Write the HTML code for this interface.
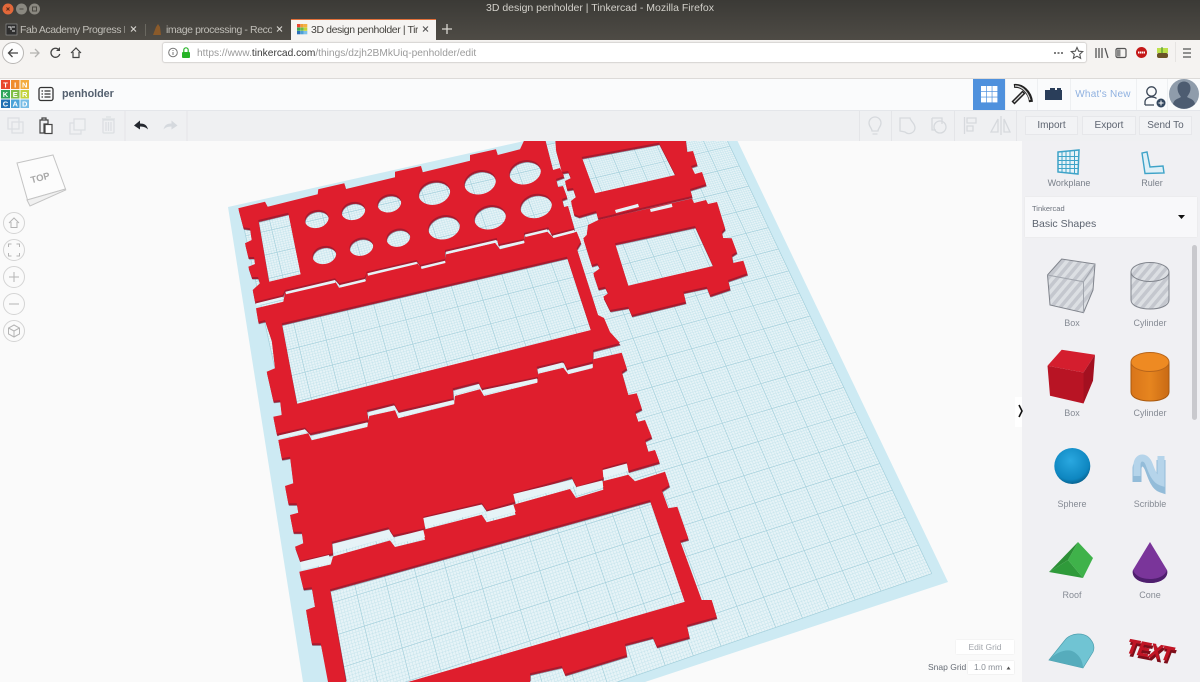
<!DOCTYPE html>
<html><head><meta charset="utf-8"><title>3D design penholder | Tinkercad</title>
<style>
html,body{margin:0;padding:0;width:1200px;height:682px;overflow:hidden;background:#fafafa;font-family:"Liberation Sans",sans-serif}
.b{position:absolute}
.t{position:absolute;white-space:nowrap;line-height:14px;height:14px}
.c{text-align:center}
svg{position:absolute;left:0;top:0}
.tab{font-size:10.5px;letter-spacing:-.4px}
</style></head><body>
<svg id="scene" width="1200" height="682" viewBox="0 0 1200 682">
<defs>
<g id="p1" fill-rule="evenodd">
<path d="M238.300 208.300L265 201.700 267.700 206.700 317.700 194.300 318.300 189.300 344.300 183.300 346 189 395 177.300 395 171.700 421 166 422.700 172.300 470 160.700 470 155 496 149.300 497.700 155 520 149.300 526.700 135 544 135 553 170 560 168 564 176 556 179 558 187 563 186 567 197 562 199 564 207 568 206 574.300 228.300 551.700 234 548.300 227.300 524 233 524 239 498.300 244.300 496.700 238 445 250 445 259 420 265 416.700 260 366.700 271.700 365 277.300 339.300 283.300 335 278.300 285 290 282.700 295 255 301.700 252.700 290 260 283.300 258 277 251.700 277 248.300 266.700 255 264 254 257 248.300 257 245 243.300 251.700 240 250 228.300 243.300 227.300Z
M258.300 220L288.300 212.700 300.700 274.300 269 281.700Z
M305 221.700A12 9 -13 1 0 328.400 216.300A12 9 -13 1 0 305 221.700Z
M341.600 213.700A12 9 -13 1 0 365 208.300A12 9 -13 1 0 341.600 213.700Z
M377.600 206A12 9 -13 1 0 401 200.600A12 9 -13 1 0 377.600 206Z
M312.600 257.700A12 9 -13 1 0 336 252.300A12 9 -13 1 0 312.600 257.700Z
M349.600 249.400A12 9 -13 1 0 373 244A12 9 -13 1 0 349.600 249.400Z
M386.600 240.400A12 9 -13 1 0 410 235A12 9 -13 1 0 386.600 240.400Z
M418.700 196.300A16 12 -13 1 0 449.900 189.100A16 12 -13 1 0 418.700 196.300Z
M464.400 185.900A16 12 -13 1 0 495.600 178.700A16 12 -13 1 0 464.400 185.900Z
M509.400 175.900A16 12 -13 1 0 540.600 168.700A16 12 -13 1 0 509.400 175.900Z
M428.400 230.900A16 12 -13 1 0 459.600 223.700A16 12 -13 1 0 428.400 230.900Z
M474.400 220.900A16 12 -13 1 0 505.600 213.700A16 12 -13 1 0 474.400 220.900Z
M520.400 209.600A16 12 -13 1 0 551.600 202.400A16 12 -13 1 0 520.400 209.600Z"/>
<path d="M256 308.300L283.300 301.700 285 292.700 335 281 339 287.700 365.700 281 366.700 273.300 416.700 262.700 421.700 268.300 445 262.700 446 254.300 495 242.700 500 249.300 524 243.300 525 236 546.700 231 553.300 237.700 576.700 231.700 580.700 241.700 576.700 248.300 598 315 604 318 610 332 620 343 593 350 592.700 361.500 566.700 368.300 563.300 360.700 536.700 366.700 538.300 376.700 481.700 388.300 478.300 381.700 452.700 388.300 453.300 398.300 398.300 410.700 394 403.300 366.700 410 368.300 420 310 433.300 305 427.500 276.700 433.700 273.300 416.700 281.700 415 280 400 273.300 400.700 266.700 371.700 275 368.300 271.700 340 265 320 258.300 321.700Z
M281.700 323.300L567 256.700 591 330 297 403.800Z"/>
<path d="M278.300 440L308.300 433.300 311.700 440.300 367.300 427 369.300 416 395 410.300 398.300 418.300 454 404.300 455 396 480 389.300 484 396 537.300 382.700 538.300 373.700 563.300 367.700 568.300 374.300 592.300 368.300 593.300 359.300 621.700 352.700 626.700 368.300 621.700 371.700 628.300 395 636.700 393.300 641.700 408.300 635 411.700 638.300 421.700 645 420 651.700 436.700 645 440 648.300 451.700 655 450 659.300 461.700 628.300 470.700 626.700 461.700 602.700 468.300 603.300 478.300 576.700 486.700 571.700 476.700 513.300 493.300 515 501.700 486.700 510 481.700 502.700 423.300 516.700 425 528.300 393.300 535 388.300 527.300 331.700 541.700 332.700 553.300 300 560.700 295 546.700 303.300 543.300 301.700 531.700 293.300 531.700 290 515 298.300 512.700 296.700 503.300 288.300 503.300 285 486 293.300 483.300 290 456.700 281.700 458.300Z"/>
<path d="M555 135L685 135 687 152 693 151 697 164 691 166 695 174 702 172 706 184 690 189 692 196 598 218 596 211 579 216 574 214 571 201 576 197 573 188 567 189 565 181 571 178 568 171 562 172 556 150Z
M581.700 157L659 142.700 675.500 175 595 193.300Z"/>
<path d="M583.300 238.300L586.700 235 588 225 598.300 220 692 198.500 694 203 706 200 708 204 717 202 725 228.300 721.700 231.700 723 238 731.700 238.300 736.700 251.700 731.700 255 733 263 743.300 260.700 747.300 273.300 728 280 730 288.300 710 295 706.700 286.700 683.300 291.700 685.700 301.700 631.700 315 628.300 306.700 610 310 603.300 296.700 608.300 293.300 605 286.700 598.300 288.300 593.300 273.300 600 268.300 597.300 263.300 591.700 265Z
M615 243.300L695 226 713.300 266 628.300 285.700Z"/>
</g>
<path id="d1" fill-rule="evenodd" d="M299.300 571.700L330.700 564.500 333 556.500 390 540.500 395 547 425 539.700 423.300 529.700 481.700 514.700 486.700 522.300 515.700 514.700 513.300 504.700 570 489 576 498 603.300 489.700 602.700 481.300 628.300 474.700 635 481.300 665 471.700 669.300 485 661.700 490 668.300 508.300 677.300 506.700 688.300 538.300 680 540.700 701.700 600 711.700 600 716.700 616.700 686.700 625 689.300 636.700 656.700 646 652.700 636.700 625 644 626.700 655 565 674 561.700 666 530 673.300 530 682 328 682 320.700 643.300 311.700 643.300 306 610 315 606.700 311.700 587.300 303.300 588.300Z
M330 589.300L650 500 685 601.700 408 682 346 682Z"/>
<path id="d2" fill-rule="evenodd" d="M299.300 571.700L330.700 564.500 333 556.500 390 540.500 395 547 425 539.700 423.300 529.700 481.700 514.700 486.700 522.300 515.700 514.700 513.300 504.700 570 489 576 498 603.300 489.700 602.700 481.300 628.300 474.700 635 481.300 665 471.700 669.300 485 661.700 490 668.300 508.300 677.300 506.700 688.300 538.300 680 540.700 701.700 600 711.700 600 716.700 616.700 686.700 625 689.300 636.700 656.700 646 652.700 636.700 625 644 626.700 655 565 674 561.700 666 530 673.300 530 679 328 679 320.700 643.300 311.700 643.300 306 610 315 606.700 311.700 587.300 303.300 588.300Z
M330 589.300L650 500 685 601.700 418 679 346 679Z"/>
<pattern id="st" width="7" height="7" patternUnits="userSpaceOnUse" patternTransform="rotate(40)"><rect width="7" height="7" fill="#dcdfe3"/><rect width="3.500" height="7" fill="#c4c7ce"/></pattern>
<radialGradient id="sph" cx=".45" cy=".35" r=".7"><stop offset="0" stop-color="#2aa8e0"/><stop offset=".75" stop-color="#0e86c0"/><stop offset="1" stop-color="#07577f"/></radialGradient>
<linearGradient id="org" x1="0" x2="1" y1="0" y2="0"><stop offset="0" stop-color="#d9751a"/><stop offset=".5" stop-color="#e6851f"/><stop offset="1" stop-color="#c96a14"/></linearGradient>
</defs>
<polygon points="228,207 717,98 948,582 645,682 303,682" fill="#cdeaf3"/>
<polygon id="inner" points="238,215 712,109 938,579 640,676 311,676" fill="#e6f3f7"/>
<g id="grid"></g>
<g fill="#555a70" opacity=".6" transform="translate(.8,2.600)"><use href="#p1"/><use href="#d2"/></g>
<g fill="#a81a2e" transform="translate(.4,2)"><use href="#p1"/><use href="#d2"/></g>
<g fill="#df1e2d"><use href="#p1"/><use href="#d1"/></g>
<g fill="#e6f3f7">
<polygon points="256,303.400 282.700,296.800 283,299.300 256.500,305.800"/>
<polygon points="285.500,291.700 335,280 335.500,282.700 286,294.200"/>
<polygon points="340,285 365,279 365.500,281.500 340.500,287.500"/>
<polygon points="367.500,273.200 416.700,261.700 417,264 368,275.700"/>
<polygon points="421,266.500 445,260.700 445.500,263 421.500,269"/>
<polygon points="446,251.700 496,240 496.500,242.500 446.500,254.200"/>
<polygon points="499.500,246 524,240.500 524.500,243 500,248.500"/>
<polygon points="525,234.500 547,229.200 547.500,231.700 525.500,237"/>
<polygon points="553,235.500 574,230 574.500,232.500 553.500,238"/>
<polygon points="279,435.500 305,429.300 306,432.500 280,438.500"/>
<polygon points="311.500,436 367,422.500 367.500,426 312,439.500"/>
<polygon points="369,412 394,405.500 395,409 369.500,415.500"/>
<polygon points="399,413 453.500,400 454.500,403.500 399.500,416.500"/>
<polygon points="455,390.500 479,384 480.500,387.500 455.500,394.500"/>
<polygon points="483,390 537,378.500 537.500,382 484,394.500"/>
<polygon points="539,368.500 562.500,362.500 563.500,366 539.500,372"/>
<polygon points="568,370 592.500,364 593,367.500 568.500,373.500"/>
<polygon points="300,562 329,555 330.700,562.700 301.700,570"/>
<polygon points="332.700,544 389.300,529.500 391.700,537 333.500,552"/>
<polygon points="395,537.300 423.300,530 425,537 396.700,544"/>
<polygon points="423.300,518 481.700,504.500 484,511.700 425,527"/>
<polygon points="486.700,511.500 513.300,504.500 515.700,511.700 487.700,519.500"/>
<polygon points="513.300,494 571,480 575,486 515,501"/>
<polygon points="576.500,487 602,480.500 603.300,487 577.500,494"/>
<polygon points="602.700,470 626.700,463.500 628.300,470.700 603.300,477.300"/>
<polygon points="615,210 638,203.800 639,207 616,213"/>
<polygon points="650,209 671.700,203.800 672.500,207 650.800,212"/>
</g>
</svg>
<script>
(function(){
var X=[228,717,948,353],Y=[207,98,582,789];
var dx1=X[1]-X[2],dx2=X[3]-X[2],sx=X[0]-X[1]+X[2]-X[3],dy1=Y[1]-Y[2],dy2=Y[3]-Y[2],sy=Y[0]-Y[1]+Y[2]-Y[3];
var D=dx1*dy2-dx2*dy1,g=(sx*dy2-dx2*sy)/D,h=(dx1*sy-sx*dy1)/D;
var a=X[1]-X[0]+g*X[1],b=X[3]-X[0]+h*X[3],c=X[0],d=Y[1]-Y[0]+g*Y[1],e=Y[3]-Y[0]+h*Y[3],f=Y[0];
function P(u,v){var w=g*u+h*v+1;return [(a*u+b*v+c)/w,(d*u+e*v+f)/w];}
function L(p,q){
 if(p[1]>682&&q[1]>682)return '';
 if(q[1]>682){var r=(682-p[1])/(q[1]-p[1]);q=[p[0]+(q[0]-p[0])*r,682];}
 if(p[1]>682){var r2=(682-q[1])/(p[1]-q[1]);p=[q[0]+(p[0]-q[0])*r2,682];}
 return 'M'+p[0].toFixed(1)+' '+p[1].toFixed(1)+'L'+q[0].toFixed(1)+' '+q[1].toFixed(1);
}
var m=.02,n=20,k=10,mi='',ma='';
for(var i=0;i<=n*k;i++){var t=m+(1-2*m)*i/(n*k);
 var s=L(P(t,m),P(t,1-m))+L(P(m,t),P(1-m,t));
 if(i%k==0)ma+=s;else mi+=s;}
var A=P(m,m),B=P(1-m,m),C=P(1-m,1-m),E=P(m,1-m);
function cut(p,q){var r=(682-p[1])/(q[1]-p[1]);return [p[0]+(q[0]-p[0])*r,682];}
var c1=cut(C,E),c2=cut(A,E);
document.getElementById('inner').setAttribute('points',[A,B,C,c1,c2].map(function(o){return o[0].toFixed(1)+','+o[1].toFixed(1)}).join(' '));
var G=document.getElementById('grid'),ns='http://www.w3.org/2000/svg';
function add(dd,col,w){var p=document.createElementNS(ns,'path');p.setAttribute('d',dd);p.setAttribute('stroke',col);p.setAttribute('stroke-width',w);p.setAttribute('fill','none');G.appendChild(p);}
add(mi,'#bcdfe9','.4');add(ma,'#a3cfdb','.7');
})();
</script>

<!-- browser chrome -->
<div class="b" style="left:0;top:0;width:1200px;height:40px;background:linear-gradient(#3b3a36,#4e4b45)"></div>
<div class="t c" style="left:0;top:1px;width:1200px;font-size:10.5px;color:#d2d0ca">3D design penholder | Tinkercad - Mozilla Firefox</div>
<div class="t tab" style="left:20px;top:23px;width:105px;overflow:hidden;color:#c0beb8">Fab Academy Progress D</div>
<div class="t tab" style="left:166px;top:23px;width:106px;overflow:hidden;color:#c0beb8">image processing - Recor</div>
<div class="b" style="left:291px;top:19px;width:145px;height:21px;background:#f5f4f2;border-top:1px solid #e2703a;box-sizing:border-box"></div>
<div class="t tab" style="left:311px;top:23px;width:107px;overflow:hidden;color:#45433f">3D design penholder | Tir</div>
<div class="b" style="left:0;top:40px;width:1200px;height:38px;background:#f5f3f1"></div>
<div class="b" style="left:163px;top:43px;width:923px;height:19px;background:#fff;border-radius:2px;box-shadow:0 0 1px 1px #d5d3d1"></div>
<div class="t" style="left:197px;top:47px;font-size:10.2px;color:#9b9b9b">https://www.<span style="color:#3a3a3a">tinkercad.com</span>/things/dzjh2BMkUiq-penholder/edit</div>
<div class="b" style="left:0;top:78px;width:1200px;height:1px;background:#dcdad8"></div>

<!-- tinkercad header -->
<div class="b" style="left:0;top:79px;width:1200px;height:31px;background:#fafbfc"></div>
<div class="b" style="left:0;top:110px;width:1200px;height:31px;background:#eff0f2;border-top:1px solid #e4e6ea;box-sizing:border-box"></div>
<div class="b" style="left:1022px;top:141px;width:178px;height:541px;background:#f0f0f3"></div>
<div class="b" style="left:973px;top:79px;width:32px;height:31px;background:#4f91dd"></div>
<div class="t" style="left:62px;top:87px;font-size:10.8px;font-weight:bold;color:#54606f;letter-spacing:-.05px">penholder</div>
<div class="t c" style="left:1070px;top:88px;width:66px;font-size:10px;color:#8fb1e0;letter-spacing:.25px">What's New</div>
<div class="b" style="left:1025px;top:116px;width:53px;height:19px;background:#f2f3f5;border:1px solid #e6e7ea;box-sizing:border-box"></div>
<div class="b" style="left:1082px;top:116px;width:54px;height:19px;background:#f2f3f5;border:1px solid #e6e7ea;box-sizing:border-box"></div>
<div class="b" style="left:1139px;top:116px;width:53px;height:19px;background:#f2f3f5;border:1px solid #e6e7ea;box-sizing:border-box"></div>
<div class="t c" style="left:1025px;top:119px;width:53px;font-size:10px;color:#5d6470">Import</div>
<div class="t c" style="left:1082px;top:119px;width:54px;font-size:10px;color:#5d6470">Export</div>
<div class="t c" style="left:1139px;top:119px;width:53px;font-size:10px;color:#5d6470">Send To</div>

<!-- sidebar -->
<div class="t c" style="left:1034px;top:176px;width:70px;font-size:9px;color:#7a808a">Workplane</div>
<div class="t c" style="left:1122px;top:176px;width:60px;font-size:9px;color:#7a808a">Ruler</div>
<div class="b" style="left:1025px;top:197px;width:172px;height:40px;background:#f8f8fa;box-shadow:0 0 1px #ddd"></div>
<div class="t" style="left:1032px;top:202px;font-size:7.500px;color:#6c727c">Tinkercad</div>
<div class="t" style="left:1032px;top:217px;font-size:10.500px;color:#5d6470">Basic Shapes</div>
<div class="b" style="left:1015px;top:397px;width:7px;height:30px;background:#fff"></div>
<div class="b" style="left:1192px;top:245px;width:5px;height:175px;background:#c9c9cd;border-radius:3px"></div>
<div class="t c" style="left:1042px;top:316px;width:60px;font-size:9px;color:#868b94">Box</div>
<div class="t c" style="left:1120px;top:316px;width:60px;font-size:9px;color:#868b94">Cylinder</div>
<div class="t c" style="left:1042px;top:406px;width:60px;font-size:9px;color:#868b94">Box</div>
<div class="t c" style="left:1120px;top:406px;width:60px;font-size:9px;color:#868b94">Cylinder</div>
<div class="t c" style="left:1042px;top:497px;width:60px;font-size:9px;color:#868b94">Sphere</div>
<div class="t c" style="left:1120px;top:497px;width:60px;font-size:9px;color:#868b94">Scribble</div>
<div class="t c" style="left:1042px;top:588px;width:60px;font-size:9px;color:#868b94">Roof</div>
<div class="t c" style="left:1120px;top:588px;width:60px;font-size:9px;color:#868b94">Cone</div>

<!-- grid controls -->
<div class="b" style="left:956px;top:640px;width:58px;height:14px;background:#fff;box-shadow:0 0 1px #e0e0e0"></div>
<div class="t c" style="left:956px;top:640px;width:58px;font-size:8.500px;color:#a3a7ad">Edit Grid</div>
<div class="t" style="left:928px;top:660px;font-size:8.500px;color:#666c75">Snap Grid</div>
<div class="b" style="left:968px;top:661px;width:46px;height:13px;background:#fff;box-shadow:0 0 1px #d5d5d5"></div>
<div class="t" style="left:974px;top:660px;font-size:8.500px;color:#8a8f96">1.0 mm</div>

<!-- icon overlay -->
<svg width="1200" height="682" viewBox="0 0 1200 682">
<circle cx="8" cy="9" r="5.500" fill="#e2683a"/><circle cx="21.500" cy="9" r="5.500" fill="#8a8880"/><circle cx="34.500" cy="9" r="5.500" fill="#8a8880"/>
<path d="M6.500 7.500l3 3m0-3l-3 3" stroke="#5a2a18" fill="none"/><path d="M19.500 9h4" stroke="#4a4842"/><rect x="32.500" y="7" width="4" height="4" fill="none" stroke="#4a4842"/>
<rect x="6" y="24" width="11" height="11" fill="#2e2e2e" stroke="#999" stroke-width=".6"/>
<path d="M8 27h3v3M12 27h3M12 31h3" stroke="#ddd" fill="none"/>
<path d="M131 26.500l5 5m0-5l-5 5M277 26.500l5 5m0-5l-5 5" stroke="#d8d6d0" fill="none" stroke-width="1.100"/>
<path d="M423 26.500l5 5m0-5l-5 5" stroke="#555" fill="none" stroke-width="1.100"/>
<path d="M145.500 24v12" stroke="#6a6860"/>
<path d="M153 35l3-8 2-3 2 3 1 8z" fill="#8a5a2a"/>
<g><rect x="297" y="24" width="3.300" height="3.300" fill="#e8472f"/><rect x="300.500" y="24" width="3.300" height="3.300" fill="#f0a030"/><rect x="304" y="24" width="3.300" height="3.300" fill="#f4b040"/><rect x="297" y="27.500" width="3.300" height="3.300" fill="#3aa655"/><rect x="300.500" y="27.500" width="3.300" height="3.300" fill="#6dbb45"/><rect x="304" y="27.500" width="3.300" height="3.300" fill="#c4d232"/><rect x="297" y="31" width="3.300" height="3.300" fill="#2a70b8"/><rect x="300.500" y="31" width="3.300" height="3.300" fill="#4aa0d8"/><rect x="304" y="31" width="3.300" height="3.300" fill="#7cc0e8"/></g>
<path d="M447 24v10M442 29h10" stroke="#d8d6d0" stroke-width="1.300"/>
<circle cx="13" cy="53" r="10.500" fill="#fdfdfd" stroke="#b8b6b4"/>
<path d="M18 53H8.500m4-4l-4 4 4 4" fill="none" stroke="#444" stroke-width="1.300"/>
<path d="M30 53h9m-4-4l4 4-4 4" fill="none" stroke="#b4b3b1" stroke-width="1.300"/>
<path d="M59 50a4.500 4.500 0 1 0 .8 4" fill="none" stroke="#444" stroke-width="1.300"/><path d="M60 47v4h-4z" fill="#444"/>
<path d="M71 53l5-5 5 5M73 52v5.500h6V52" fill="none" stroke="#444" stroke-width="1.200"/>
<circle cx="173" cy="52.500" r="4.300" fill="none" stroke="#777"/><path d="M173 52v3M173 50v1" stroke="#777"/>
<rect x="182" y="52" width="8" height="6" rx="1" fill="#27b327"/><path d="M183.800 52v-2a2.200 2.200 0 0 1 4.400 0v2" fill="none" stroke="#27b327" stroke-width="1.200"/>
<path d="M1054 53h2M1057.500 53h2M1061 53h2" stroke="#555" stroke-width="1.500"/>
<path d="M1077 47.500l1.700 3.700 4 .4-3 2.700.9 4-3.600-2.100-3.600 2.100.9-4-3-2.700 4-.4z" fill="none" stroke="#555" stroke-width="1.100"/>
<path d="M1096 48v10M1099 48v10M1102 48v10M1105 48l3 10" stroke="#555" stroke-width="1.300" fill="none"/>
<rect x="1116" y="48.500" width="10" height="9" rx="1.500" fill="none" stroke="#555" stroke-width="1.200"/><rect x="1117" y="49.500" width="3.500" height="7" fill="#888"/>
<circle cx="1141.500" cy="52.500" r="5.500" fill="#c41818"/><path d="M1138 52.500h7" stroke="#fff" stroke-width="2" stroke-dasharray="1.500 .5"/>
<rect x="1157" y="48" width="11" height="5" fill="#bde04a"/><rect x="1157" y="53" width="11" height="5" rx="2" fill="#6a5226"/><path d="M1162 47v6" stroke="#3a8a2a"/>
<path d="M1183 49h8M1183 53h8M1183 57h8" stroke="#555" stroke-width="1.300"/>
<path d="M1175.500 42v20" stroke="#e6e4e2"/>
<g font-family="Liberation Sans, sans-serif" font-size="7.500" font-weight="bold" fill="#fff" text-anchor="middle">
<rect x="1" y="80" width="9" height="9" fill="#e8472f"/><rect x="11" y="80" width="8.500" height="9" fill="#ef8c2f"/><rect x="20.500" y="80" width="8.500" height="9" fill="#f3ac3e"/>
<rect x="1" y="90" width="9" height="8.500" fill="#2fa55a"/><rect x="11" y="90" width="8.500" height="8.500" fill="#7fbe45"/><rect x="20.500" y="90" width="8.500" height="8.500" fill="#c3d23c"/>
<rect x="1" y="99.500" width="9" height="8.500" fill="#1f6fb2"/><rect x="11" y="99.500" width="8.500" height="8.500" fill="#4ba3d8"/><rect x="20.500" y="99.500" width="8.500" height="8.500" fill="#79bde6"/>
<text x="5.500" y="87.500">T</text><text x="15.200" y="87.500">I</text><text x="24.700" y="87.500">N</text>
<text x="5.500" y="97">K</text><text x="15.200" y="97">E</text><text x="24.700" y="97">R</text>
<text x="5.500" y="106.500">C</text><text x="15.200" y="106.500">A</text><text x="24.700" y="106.500">D</text></g>
<rect x="39" y="87.500" width="14" height="13" rx="2" fill="none" stroke="#333" stroke-width="1.300"/><path d="M41.500 91h1.500M44.500 91h6M41.500 94h1.500M44.500 94h6M41.500 97h1.500M44.500 97h6" stroke="#333" stroke-width="1.200"/>
<g fill="none" stroke="#dcdfe3" stroke-width="1.300"><rect x="8" y="118" width="11" height="11"/><rect x="12" y="122" width="11" height="11"/>
<rect x="70" y="123" width="11" height="11"/><rect x="74" y="119" width="11" height="11" fill="#f0f1f3"/>
<rect x="103" y="120" width="11" height="13" rx="1"/><path d="M102 119h13M106 117h5M106 122v9M108.500 122v9M111 122v9"/></g>
<path d="M40 120h8v4h-4v9h-4zM42 120v-2h4v2" fill="none" stroke="#444" stroke-width="1.200"/><rect x="45" y="124.500" width="7" height="9" fill="#fff" stroke="#444" stroke-width="1.200"/>
<path d="M125 111v30M187 111v30" stroke="#e4e5e8"/>
<path d="M134 125.500l6-5v3c5 0 7 2 8 6-2-2-4-3-8-3v3z" fill="#23272e"/>
<path d="M177.500 125.500l-6-5v3c-5 0-7 2-8 6 2-2 4-3 8-3v3z" fill="#d5d9de"/>
<g fill="none" stroke="#d6d9dd" stroke-width="1.300">
<path d="M872 131c0-3-3-4-3-8a6 6 0 0 1 12 0c0 4-3 5-3 8zM872.500 134h5"/>
<path d="M900 118h10c1 4 5 5 5 10a6 6 0 0 1-10 4l-5-1z"/>
<path d="M932 118h10v6M932 118v12h4"/><circle cx="940" cy="127" r="6"/>
<path d="M964.500 117v17M967 118h9v5h-9zM967 126h6v5h-6z"/>
<path d="M1001 116v19M998 119l-7 13h7zM1004 119l6 13h-6z"/>
<path d="M859.500 111v30M891.500 111v30M954.500 111v30M1016.500 111v30" stroke="#e4e5e8" stroke-width="1"/></g>
<g fill="#fff"><rect x="981" y="86" width="5" height="5"/><rect x="986.700" y="86" width="5" height="5"/><rect x="992.400" y="86" width="5" height="5"/><rect x="981" y="91.700" width="5" height="5"/><rect x="986.700" y="91.700" width="5" height="5"/><rect x="992.400" y="91.700" width="5" height="5"/><rect x="981" y="97.400" width="5" height="5"/><rect x="986.700" y="97.400" width="5" height="5"/><rect x="992.400" y="97.400" width="5" height="5"/></g>
<path d="M1014 86c8-1 16 6 17 16" fill="none" stroke="#222" stroke-width="4"/><path d="M1015 86c7 0 13 6 15 14" fill="none" stroke="#ddd" stroke-width="1.200"/>
<path d="M1024 92l-11 11" stroke="#222" stroke-width="4.200"/><path d="M1023 93l-9 9" stroke="#ddd" stroke-width="1.300"/>
<path d="M1045 90h5v-2h5v2h2v-2h4v2h1v10h-17z" fill="#2a3e5a"/>
<path d="M1070.500 79v31M1005.500 79v31M1037.500 79v31M1136.500 79v31M1167.500 79v31" stroke="#eef0f2"/>
<circle cx="1151.500" cy="91.500" r="4.700" fill="none" stroke="#3a4656" stroke-width="1.300"/><path d="M1145 105v-3c0-3 3-5 6.500-5 2 0 4 .5 5 1.500M1145 105h9" fill="none" stroke="#3a4656" stroke-width="1.300"/>
<circle cx="1161" cy="103" r="4.500" fill="#33475f"/><path d="M1158.500 103h5M1161 100.500v5" stroke="#fff"/>
<circle cx="1184" cy="94" r="15" fill="#8f9cab"/>
<path d="M1173 104c1-5 5-5 8-7-2-3-3.500-5-3.500-9 0-4 3-6.500 6.500-6.500s6.500 2.500 6.500 6.500c0 4-1.500 6-3.500 9 3 2 7 2 8 7a15 15 0 0 1-22 0z" fill="#4d5c71"/>
<path d="M17 163l36-8 12.500 34-38 11z" fill="#fcfcfc" stroke="#c4c4c4"/><path d="M27 200l3 6 35.700-16-.2-1z" fill="#f0f0f0" stroke="#c4c4c4"/>
<text x="40" y="181" transform="rotate(-15 40 177)" font-family="Liberation Sans, sans-serif" font-size="9.500" font-weight="bold" fill="#a8a8a8" text-anchor="middle">TOP</text>
<g fill="#fafafa" stroke="#d4d4d4"><circle cx="14" cy="223" r="10.500"/><circle cx="14" cy="250" r="10.500"/><circle cx="14" cy="277" r="10.500"/><circle cx="14" cy="304" r="10.500"/><circle cx="14" cy="331" r="10.500"/></g>
<g fill="none" stroke="#b4b4b4"><path d="M9 223l5-5 5 5M11 222v5.500h6V222"/><path d="M8.500 247v-3h3M16.500 244h3v3M19.500 253v3h-3M11.500 256h-3v-3"/><path d="M9 277h10M14 272v10"/><path d="M9 304h10"/><path d="M14 325l5.500 3v6l-5.500 3-5.500-3v-6zM8.500 328l5.500 3 5.500-3M14 331v6"/></g>
<path d="M1058 152l21-2-1 24-20-2z" fill="#e8f3f8" stroke="#3ea3c8" stroke-width="1.500"/>
<path d="M1062 152v20M1066 151.500v21M1070 151v22M1074.500 150.500v23M1058 156.500h21M1058 160.500h20.500M1058 164.500h20.500M1058 168.500h20" stroke="#3ea3c8" fill="none"/>
<path d="M1142 153l5-1 3 15 13-1 1 7-19 .5z" fill="#dff0f7" stroke="#3ea3c8" stroke-width="1.400"/>
<path d="M1178 215h7l-3.500 4z" fill="#111"/>
<path d="M1019 405l3 6-3 6" fill="none" stroke="#111" stroke-width="1.600"/>
<path d="M1047.500 275l14.200-16 33.300 5-2 26-9.500 22.700-33.500-7.700z" fill="url(#st)" stroke="#80848c"/><path d="M1047.500 275l36 6.800 11.500-17.800M1083.500 281.800l0 31" fill="none" stroke="#a2a6ae"/>
<path d="M1131 272v28c0 12 38 12 38 0v-28z" fill="url(#st)" stroke="#80848c"/><ellipse cx="1150" cy="272" rx="19" ry="9.500" fill="url(#st)" stroke="#80848c"/>
<path d="M1047.500 365.700l14.200-16 33.300 5-11.500 17.800z" fill="#d41e2e"/><path d="M1047.500 365.700l36 6.800v31l-33.500-7.700z" fill="#b81424"/><path d="M1083.500 372.500l11.500-17.800-2 26-9.500 22.800z" fill="#a31020"/>
<path d="M1131 362v30c0 12 38 12 38 0v-30z" fill="url(#org)" stroke="#a9580e"/><ellipse cx="1150" cy="362" rx="19" ry="9.500" fill="#ee8a22" stroke="#b8651a"/>
<circle cx="1072.300" cy="466" r="18" fill="url(#sph)"/>
<path d="M1137 482V468C1138 460 1146 460 1149 468C1152 476 1155 486 1161 488V460" fill="none" stroke="#93bcd9" stroke-width="9"/>
<path d="M1137 476V464C1138 456 1146 456 1149 464C1152 472 1155 480 1161 482V456" fill="none" stroke="#b5d4ea" stroke-width="7"/>
<path d="M1068 560l10-18 15 16-10 20z" fill="#3fb24a"/><path d="M1049 572l29-30-10 18z" fill="#2c8f36"/><path d="M1049 572l19-12 15 18z" fill="#2f9a3a"/>
<path d="M1150 542L1133 570C1131 578 1140 583 1150 583S1169 578 1167 570Z" fill="#7a359a"/><path d="M1133 570C1131 578 1140 583 1150 583S1169 578 1167 570C1165 576 1158 579 1150 579S1135 576 1133 570Z" fill="#4f1f6e"/>
<path d="M1049 660L1065 640C1070 633 1085 631 1091 640C1095 645 1094 650 1093 652L1083 668Z" fill="#70c4d3" stroke="#4e9fae" stroke-width=".7"/>
<path d="M1049 660C1056 652 1066 649 1072 651C1079 654 1083 661 1083 668Z" fill="#56acbc"/>
<text x="1151.500" y="659.500" transform="rotate(11 1150 650)" font-family="Liberation Sans, sans-serif" font-size="20" font-weight="bold" font-style="italic" fill="#7d0e1a" stroke="#7d0e1a" stroke-width="1.200" text-anchor="middle" textLength="46" lengthAdjust="spacingAndGlyphs">TEXT</text>
<text x="1150" y="657" transform="rotate(11 1150 650)" font-family="Liberation Sans, sans-serif" font-size="20" font-weight="bold" font-style="italic" fill="#c01525" stroke="#c01525" stroke-width=".8" text-anchor="middle" textLength="46" lengthAdjust="spacingAndGlyphs">TEXT</text>
<path d="M1006.500 669.500l2-3 2 3z" fill="#555"/>
</svg>
</body></html>
